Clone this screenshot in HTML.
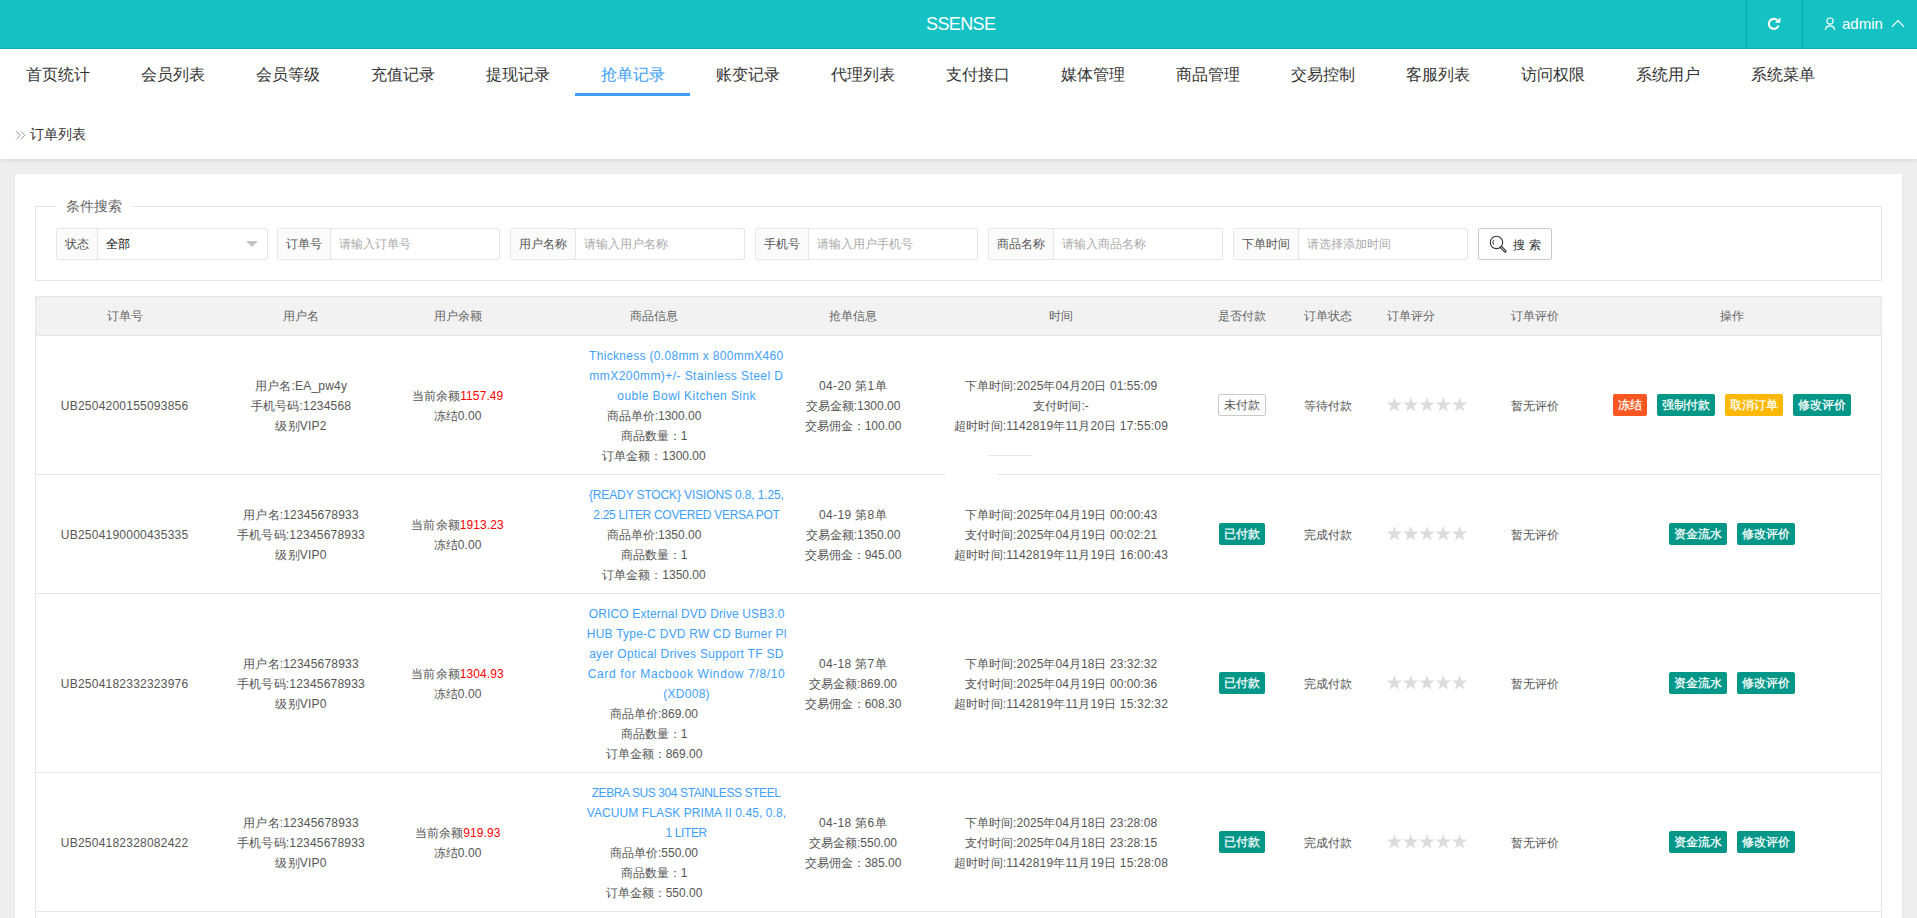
<!DOCTYPE html><html><head><meta charset="utf-8"><title>SSENSE</title><style>
*{margin:0;padding:0;box-sizing:border-box}
html,body{width:1917px;height:918px;overflow:hidden}
body{position:relative;background:#eeeeee;font-family:"Liberation Sans",sans-serif;font-size:12px;color:#666}
.a{position:absolute}
.t{position:absolute;white-space:nowrap;line-height:20px}
.c{position:absolute;white-space:nowrap;line-height:20px;text-align:center;transform:translateX(-50%)}
.hdr{position:absolute;left:0;top:0;width:1917px;height:49px;background:rgb(20,194,195);border-bottom:1px solid rgb(10,186,187)}
.vd{position:absolute;top:0;width:1px;height:49px;background:rgba(0,0,0,.12)}
.top{position:absolute;left:0;top:49px;width:1917px;height:110px;background:#fff;box-shadow:0 1px 4px rgba(0,0,0,.10)}
.nav{position:absolute;top:1px;width:115px;height:49px;text-align:center;font-size:16px;line-height:49px;color:#333}
.card{position:absolute;left:15px;top:174px;width:1887px;height:800px;background:#fff;box-shadow:0 1px 2px 0 rgba(0,0,0,.09)}
.fs{position:absolute;left:35px;top:206px;width:1847px;height:75px;border:1px solid #e6e6e6}
.ig{position:absolute;top:228px;height:32px;border:1px solid #e6e6e6;border-radius:2px;background:#fff}
.lb{position:absolute;left:0;top:0;height:30px;background:#fbfbfb;border-right:1px solid #e6e6e6;text-align:center;line-height:31px;color:#555}
.ph{position:absolute;top:0;line-height:30px;color:#aaa}
.tbl{position:absolute;left:35px;top:296px;width:1847px;height:700px;border:1px solid #e6e6e6;border-bottom:none}
.th{position:absolute;left:0;top:0;width:1845px;height:39px;background:#f2f2f2;border-bottom:1px solid #e6e6e6}
.hl{position:absolute;left:35px;width:1847px;height:1px;background:#e6e6e6}
.b{margin-top:1px;color:#555}
.link{color:#40a0ff}
.red{color:#ff0000}
.btn{position:absolute;height:22px;line-height:22px;padding:0 5px;color:#fff;font-size:12px;border-radius:2px;white-space:nowrap;text-align:center;-webkit-text-stroke:.25px #fff}
.g{background:#009688}.o{background:#ff5722}.y{background:#ffb800}
.tag0{position:absolute;height:22px;line-height:21px;border:1px solid #c9c9c9;border-radius:2px;color:#555;text-align:center;background:#fff}
.star{position:absolute;font-size:16px;color:#dcdcdc;line-height:16px;letter-spacing:0}
</style></head><body>
<div class="hdr"></div>
<div class="t" style="left:926px;top:14px;font-size:18px;line-height:20px;color:#fff;letter-spacing:-0.6px">SSENSE</div>
<div class="vd" style="left:1746px"></div><div class="vd" style="left:1802px"></div>
<svg class="a" style="left:1764px;top:14px" width="20" height="20" viewBox="0 0 20 20"><path d="M14.6 11.5 A5 5 0 1 1 13.4 6.3" fill="none" stroke="#fff" stroke-width="2.1"/><path d="M16.4 3.5 L16.4 8.7 L10.9 8.7 Z" fill="#fff"/></svg>
<svg class="a" style="left:1822px;top:14px" width="16" height="18" viewBox="0 0 16 18"><circle cx="8" cy="7.1" r="3.1" fill="none" stroke="#fff" stroke-width="1.2"/><path d="M3.3 15.8 A4.8 5 0 0 1 12.7 15.8" fill="none" stroke="#fff" stroke-width="1.2"/></svg>
<div class="t" style="left:1842px;top:14px;font-size:15px;color:#fff">admin</div>
<svg class="a" style="left:1890px;top:17px" width="16" height="12" viewBox="0 0 16 12"><path d="M2 9.8 L8 3.6 L14 9.8" fill="none" stroke="#fff" stroke-width="1.2"/></svg>
<div class="top">
<div class="nav" style="left:0px;">首页统计</div>
<div class="nav" style="left:115px;">会员列表</div>
<div class="nav" style="left:230px;">会员等级</div>
<div class="nav" style="left:345px;">充值记录</div>
<div class="nav" style="left:460px;">提现记录</div>
<div class="nav" style="left:575px;color:#3d9eff">抢单记录</div>
<div class="nav" style="left:690px;">账变记录</div>
<div class="nav" style="left:805px;">代理列表</div>
<div class="nav" style="left:920px;">支付接口</div>
<div class="nav" style="left:1035px;">媒体管理</div>
<div class="nav" style="left:1150px;">商品管理</div>
<div class="nav" style="left:1265px;">交易控制</div>
<div class="nav" style="left:1380px;">客服列表</div>
<div class="nav" style="left:1495px;">访问权限</div>
<div class="nav" style="left:1610px;">系统用户</div>
<div class="nav" style="left:1725px;">系统菜单</div>
<div class="a" style="left:575px;top:44px;width:115px;height:3px;background:#3d9eff"></div>
<svg class="a" style="left:14.5px;top:82px" width="12" height="10" viewBox="0 0 12 10"><path d="M1.3 0.3 L5.3 4.3 L1.3 8.3 M5.8 0.3 L9.8 4.3 L5.8 8.3" fill="none" stroke="#999" stroke-width="1"/></svg>
<div class="t" style="left:30px;top:75px;font-size:14px;color:#333">订单列表</div>
</div>
<div class="card"></div>
<div class="fs"></div>
<div class="a" style="left:56px;top:196px;width:76px;height:20px;background:#fff"></div>
<div class="t" style="left:66px;top:196px;font-size:14px;color:#666">条件搜索</div>
<div class="ig" style="left:56px;width:212px"><div class="lb" style="width:41px">状态</div>
<div class="ph" style="left:49px;color:#000">全部</div>
<div class="a" style="left:189px;top:12px;width:0;height:0;border-left:6px solid transparent;border-right:6px solid transparent;border-top:6px solid #c2c2c2"></div>
</div>
<div class="ig" style="left:277px;width:223px"><div class="lb" style="width:53px">订单号</div>
<div class="ph" style="left:61px">请输入订单号</div>
</div>
<div class="ig" style="left:510px;width:235px"><div class="lb" style="width:65px">用户名称</div>
<div class="ph" style="left:73px">请输入用户名称</div>
</div>
<div class="ig" style="left:755px;width:223px"><div class="lb" style="width:53px">手机号</div>
<div class="ph" style="left:61px">请输入用户手机号</div>
</div>
<div class="ig" style="left:988px;width:235px"><div class="lb" style="width:65px">商品名称</div>
<div class="ph" style="left:73px">请输入商品名称</div>
</div>
<div class="ig" style="left:1233px;width:235px"><div class="lb" style="width:65px">下单时间</div>
<div class="ph" style="left:73px">请选择添加时间</div>
</div>
<div class="ig" style="left:1478px;width:74px;border-color:#c9c9c9"></div>
<svg class="a" style="left:1486px;top:233px" width="24" height="22" viewBox="0 0 24 22"><circle cx="10.5" cy="9.4" r="6.2" fill="none" stroke="#333" stroke-width="1.1"/><path d="M7.7 7.2 A3.5 3.5 0 0 0 7.7 11.6" fill="none" stroke="#333" stroke-width="1"/><path d="M15.2 14.2 L19.2 18.2" stroke="#333" stroke-width="2.8" stroke-linecap="round"/><path d="M15.6 14.6 L18.8 17.8" stroke="#fff" stroke-width="0.9" stroke-linecap="round"/></svg>
<div class="t" style="left:1513px;top:235px;color:#333;letter-spacing:4px">搜索</div>
<div class="tbl"></div><div class="th" style="left:36px;top:297px"></div>
<div class="c" style="left:124.6px;top:306px">订单号</div>
<div class="c" style="left:301px;top:306px">用户名</div>
<div class="c" style="left:457.6px;top:306px">用户余额</div>
<div class="c" style="left:654px;top:306px">商品信息</div>
<div class="c" style="left:853px;top:306px">抢单信息</div>
<div class="c" style="left:1061px;top:306px">时间</div>
<div class="c" style="left:1241.5px;top:306px">是否付款</div>
<div class="c" style="left:1328px;top:306px">订单状态</div>
<div class="c" style="left:1411px;top:306px">订单评分</div>
<div class="c" style="left:1535px;top:306px">订单评价</div>
<div class="c" style="left:1731.6px;top:306px">操作</div>
<div class="hl" style="top:474px"></div>
<div class="hl" style="top:593px"></div>
<div class="hl" style="top:772px"></div>
<div class="hl" style="top:911px"></div>
<div class="c b" style="left:124.6px;top:395px;letter-spacing:.23px">UB2504200155093856</div>
<div class="c b" style="left:301px;top:375px;letter-spacing:.2px">用户名:EA_pw4y<br>手机号码:1234568<br>级别VIP2</div>
<div class="c b" style="left:457.6px;top:385px;letter-spacing:.1px">当前余额<span class="red">1157.49</span><br>冻结0.00</div>
<div class="c b link" style="left:686.31px;top:345px;letter-spacing:0.314px">Thickness (0.08mm x 800mmX460</div>
<div class="c b link" style="left:686.42px;top:365px;letter-spacing:0.434px">mmX200mm)+/- Stainless Steel D</div>
<div class="c b link" style="left:686.66px;top:385px;letter-spacing:0.427px">ouble Bowl Kitchen Sink</div>
<div class="c b" style="left:654px;top:405px">商品单价:1300.00<br>商品数量：1<br>订单金额：1300.00</div>
<div class="c b" style="left:853px;top:375px"><span style="letter-spacing:.35px">04-20 第1单</span><br>交易金额:1300.00<br>交易佣金：100.00</div>
<div class="c b" style="left:1061px;top:375px;letter-spacing:.06px">下单时间:2025年04月20日 01:55:09<br>支付时间:-<br><span style="letter-spacing:.18px">超时时间:1142819年11月20日 17:55:09</span></div>
<div class="tag0" style="left:1218px;top:394px;width:48px">未付款</div>
<div class="c b" style="left:1328px;top:395px">等待付款</div>
<svg class="a" style="left:1387px;top:397px" width="82" height="16" viewBox="0 0 82 16"><polygon transform="translate(-0.6,0)" points="8.00,0.00 9.89,5.44 15.65,5.56 11.06,9.03 12.73,14.54 8.00,11.26 3.27,14.54 4.94,9.03 0.35,5.56 6.11,5.44" fill="#dcdcdc"/><polygon transform="translate(15.7,0)" points="8.00,0.00 9.89,5.44 15.65,5.56 11.06,9.03 12.73,14.54 8.00,11.26 3.27,14.54 4.94,9.03 0.35,5.56 6.11,5.44" fill="#dcdcdc"/><polygon transform="translate(32.0,0)" points="8.00,0.00 9.89,5.44 15.65,5.56 11.06,9.03 12.73,14.54 8.00,11.26 3.27,14.54 4.94,9.03 0.35,5.56 6.11,5.44" fill="#dcdcdc"/><polygon transform="translate(48.3,0)" points="8.00,0.00 9.89,5.44 15.65,5.56 11.06,9.03 12.73,14.54 8.00,11.26 3.27,14.54 4.94,9.03 0.35,5.56 6.11,5.44" fill="#dcdcdc"/><polygon transform="translate(64.6,0)" points="8.00,0.00 9.89,5.44 15.65,5.56 11.06,9.03 12.73,14.54 8.00,11.26 3.27,14.54 4.94,9.03 0.35,5.56 6.11,5.44" fill="#dcdcdc"/></svg>
<div class="c b" style="left:1535px;top:395px">暂无评价</div>
<div class="btn o" style="left:1613px;top:394px;width:34px">冻结</div>
<div class="btn g" style="left:1657px;top:394px;width:58px">强制付款</div>
<div class="btn y" style="left:1725px;top:394px;width:58px">取消订单</div>
<div class="btn g" style="left:1793px;top:394px;width:58px">修改评价</div>
<div class="c b" style="left:124.6px;top:524px;letter-spacing:.23px">UB2504190000435335</div>
<div class="c b" style="left:301px;top:504px;letter-spacing:.2px">用户名:12345678933<br>手机号码:12345678933<br>级别VIP0</div>
<div class="c b" style="left:457.6px;top:514px;letter-spacing:.1px">当前余额<span class="red">1913.23</span><br>冻结0.00</div>
<div class="c b link" style="left:686.39px;top:484px;letter-spacing:-0.129px">{READY STOCK} VISIONS 0.8, 1.25,</div>
<div class="c b link" style="left:686.45px;top:504px;letter-spacing:-0.304px">2.25 LITER COVERED VERSA POT</div>
<div class="c b" style="left:654px;top:524px">商品单价:1350.00<br>商品数量：1<br>订单金额：1350.00</div>
<div class="c b" style="left:853px;top:504px"><span style="letter-spacing:.35px">04-19 第8单</span><br>交易金额:1350.00<br>交易佣金：945.00</div>
<div class="c b" style="left:1061px;top:504px;letter-spacing:.06px">下单时间:2025年04月19日 00:00:43<br>支付时间:2025年04月19日 00:02:21<br><span style="letter-spacing:.18px">超时时间:1142819年11月19日 16:00:43</span></div>
<div class="btn g" style="left:1219px;top:523px;width:46px;padding:0">已付款</div>
<div class="c b" style="left:1328px;top:524px">完成付款</div>
<svg class="a" style="left:1387px;top:526px" width="82" height="16" viewBox="0 0 82 16"><polygon transform="translate(-0.6,0)" points="8.00,0.00 9.89,5.44 15.65,5.56 11.06,9.03 12.73,14.54 8.00,11.26 3.27,14.54 4.94,9.03 0.35,5.56 6.11,5.44" fill="#dcdcdc"/><polygon transform="translate(15.7,0)" points="8.00,0.00 9.89,5.44 15.65,5.56 11.06,9.03 12.73,14.54 8.00,11.26 3.27,14.54 4.94,9.03 0.35,5.56 6.11,5.44" fill="#dcdcdc"/><polygon transform="translate(32.0,0)" points="8.00,0.00 9.89,5.44 15.65,5.56 11.06,9.03 12.73,14.54 8.00,11.26 3.27,14.54 4.94,9.03 0.35,5.56 6.11,5.44" fill="#dcdcdc"/><polygon transform="translate(48.3,0)" points="8.00,0.00 9.89,5.44 15.65,5.56 11.06,9.03 12.73,14.54 8.00,11.26 3.27,14.54 4.94,9.03 0.35,5.56 6.11,5.44" fill="#dcdcdc"/><polygon transform="translate(64.6,0)" points="8.00,0.00 9.89,5.44 15.65,5.56 11.06,9.03 12.73,14.54 8.00,11.26 3.27,14.54 4.94,9.03 0.35,5.56 6.11,5.44" fill="#dcdcdc"/></svg>
<div class="c b" style="left:1535px;top:524px">暂无评价</div>
<div class="btn g" style="left:1669px;top:523px;width:58px">资金流水</div>
<div class="btn g" style="left:1737px;top:523px;width:58px">修改评价</div>
<div class="c b" style="left:124.6px;top:673px;letter-spacing:.23px">UB2504182332323976</div>
<div class="c b" style="left:301px;top:653px;letter-spacing:.2px">用户名:12345678933<br>手机号码:12345678933<br>级别VIP0</div>
<div class="c b" style="left:457.6px;top:663px;letter-spacing:.1px">当前余额<span class="red">1304.93</span><br>冻结0.00</div>
<div class="c b link" style="left:686.67px;top:603px;letter-spacing:0.140px">ORICO External DVD Drive USB3.0</div>
<div class="c b link" style="left:686.66px;top:623px;letter-spacing:0.228px">HUB Type-C DVD RW CD Burner Pl</div>
<div class="c b link" style="left:686.45px;top:643px;letter-spacing:0.306px">ayer Optical Drives Support TF SD</div>
<div class="c b link" style="left:686.58px;top:663px;letter-spacing:0.655px">Card for Macbook Window 7/8/10</div>
<div class="c b link" style="left:686.58px;top:683px;letter-spacing:0.267px">(XD008)</div>
<div class="c b" style="left:654px;top:703px">商品单价:869.00<br>商品数量：1<br>订单金额：869.00</div>
<div class="c b" style="left:853px;top:653px"><span style="letter-spacing:.35px">04-18 第7单</span><br>交易金额:869.00<br>交易佣金：608.30</div>
<div class="c b" style="left:1061px;top:653px;letter-spacing:.06px">下单时间:2025年04月18日 23:32:32<br>支付时间:2025年04月19日 00:00:36<br><span style="letter-spacing:.18px">超时时间:1142819年11月19日 15:32:32</span></div>
<div class="btn g" style="left:1219px;top:672px;width:46px;padding:0">已付款</div>
<div class="c b" style="left:1328px;top:673px">完成付款</div>
<svg class="a" style="left:1387px;top:675px" width="82" height="16" viewBox="0 0 82 16"><polygon transform="translate(-0.6,0)" points="8.00,0.00 9.89,5.44 15.65,5.56 11.06,9.03 12.73,14.54 8.00,11.26 3.27,14.54 4.94,9.03 0.35,5.56 6.11,5.44" fill="#dcdcdc"/><polygon transform="translate(15.7,0)" points="8.00,0.00 9.89,5.44 15.65,5.56 11.06,9.03 12.73,14.54 8.00,11.26 3.27,14.54 4.94,9.03 0.35,5.56 6.11,5.44" fill="#dcdcdc"/><polygon transform="translate(32.0,0)" points="8.00,0.00 9.89,5.44 15.65,5.56 11.06,9.03 12.73,14.54 8.00,11.26 3.27,14.54 4.94,9.03 0.35,5.56 6.11,5.44" fill="#dcdcdc"/><polygon transform="translate(48.3,0)" points="8.00,0.00 9.89,5.44 15.65,5.56 11.06,9.03 12.73,14.54 8.00,11.26 3.27,14.54 4.94,9.03 0.35,5.56 6.11,5.44" fill="#dcdcdc"/><polygon transform="translate(64.6,0)" points="8.00,0.00 9.89,5.44 15.65,5.56 11.06,9.03 12.73,14.54 8.00,11.26 3.27,14.54 4.94,9.03 0.35,5.56 6.11,5.44" fill="#dcdcdc"/></svg>
<div class="c b" style="left:1535px;top:673px">暂无评价</div>
<div class="btn g" style="left:1669px;top:672px;width:58px">资金流水</div>
<div class="btn g" style="left:1737px;top:672px;width:58px">修改评价</div>
<div class="c b" style="left:124.6px;top:832px;letter-spacing:.23px">UB2504182328082422</div>
<div class="c b" style="left:301px;top:812px;letter-spacing:.2px">用户名:12345678933<br>手机号码:12345678933<br>级别VIP0</div>
<div class="c b" style="left:457.6px;top:822px;letter-spacing:.1px">当前余额<span class="red">919.93</span><br>冻结0.00</div>
<div class="c b link" style="left:686.1px;top:782px;letter-spacing:-0.400px">ZEBRA SUS 304 STAINLESS STEEL</div>
<div class="c b link" style="left:686.5px;top:802px;letter-spacing:0.090px">VACUUM FLASK PRIMA II 0.45, 0.8,</div>
<div class="c b link" style="left:686.2px;top:822px;letter-spacing:-0.400px">1 LITER</div>
<div class="c b" style="left:654px;top:842px">商品单价:550.00<br>商品数量：1<br>订单金额：550.00</div>
<div class="c b" style="left:853px;top:812px"><span style="letter-spacing:.35px">04-18 第6单</span><br>交易金额:550.00<br>交易佣金：385.00</div>
<div class="c b" style="left:1061px;top:812px;letter-spacing:.06px">下单时间:2025年04月18日 23:28:08<br>支付时间:2025年04月18日 23:28:15<br><span style="letter-spacing:.18px">超时时间:1142819年11月19日 15:28:08</span></div>
<div class="btn g" style="left:1219px;top:831px;width:46px;padding:0">已付款</div>
<div class="c b" style="left:1328px;top:832px">完成付款</div>
<svg class="a" style="left:1387px;top:834px" width="82" height="16" viewBox="0 0 82 16"><polygon transform="translate(-0.6,0)" points="8.00,0.00 9.89,5.44 15.65,5.56 11.06,9.03 12.73,14.54 8.00,11.26 3.27,14.54 4.94,9.03 0.35,5.56 6.11,5.44" fill="#dcdcdc"/><polygon transform="translate(15.7,0)" points="8.00,0.00 9.89,5.44 15.65,5.56 11.06,9.03 12.73,14.54 8.00,11.26 3.27,14.54 4.94,9.03 0.35,5.56 6.11,5.44" fill="#dcdcdc"/><polygon transform="translate(32.0,0)" points="8.00,0.00 9.89,5.44 15.65,5.56 11.06,9.03 12.73,14.54 8.00,11.26 3.27,14.54 4.94,9.03 0.35,5.56 6.11,5.44" fill="#dcdcdc"/><polygon transform="translate(48.3,0)" points="8.00,0.00 9.89,5.44 15.65,5.56 11.06,9.03 12.73,14.54 8.00,11.26 3.27,14.54 4.94,9.03 0.35,5.56 6.11,5.44" fill="#dcdcdc"/><polygon transform="translate(64.6,0)" points="8.00,0.00 9.89,5.44 15.65,5.56 11.06,9.03 12.73,14.54 8.00,11.26 3.27,14.54 4.94,9.03 0.35,5.56 6.11,5.44" fill="#dcdcdc"/></svg>
<div class="c b" style="left:1535px;top:832px">暂无评价</div>
<div class="btn g" style="left:1669px;top:831px;width:58px">资金流水</div>
<div class="btn g" style="left:1737px;top:831px;width:58px">修改评价</div>
<div class="a" style="left:945px;top:474px;width:52px;height:1px;background:#fff"></div>
<div class="a" style="left:988px;top:455px;width:44px;height:1px;background:#e8e8e8"></div>
</body></html>
